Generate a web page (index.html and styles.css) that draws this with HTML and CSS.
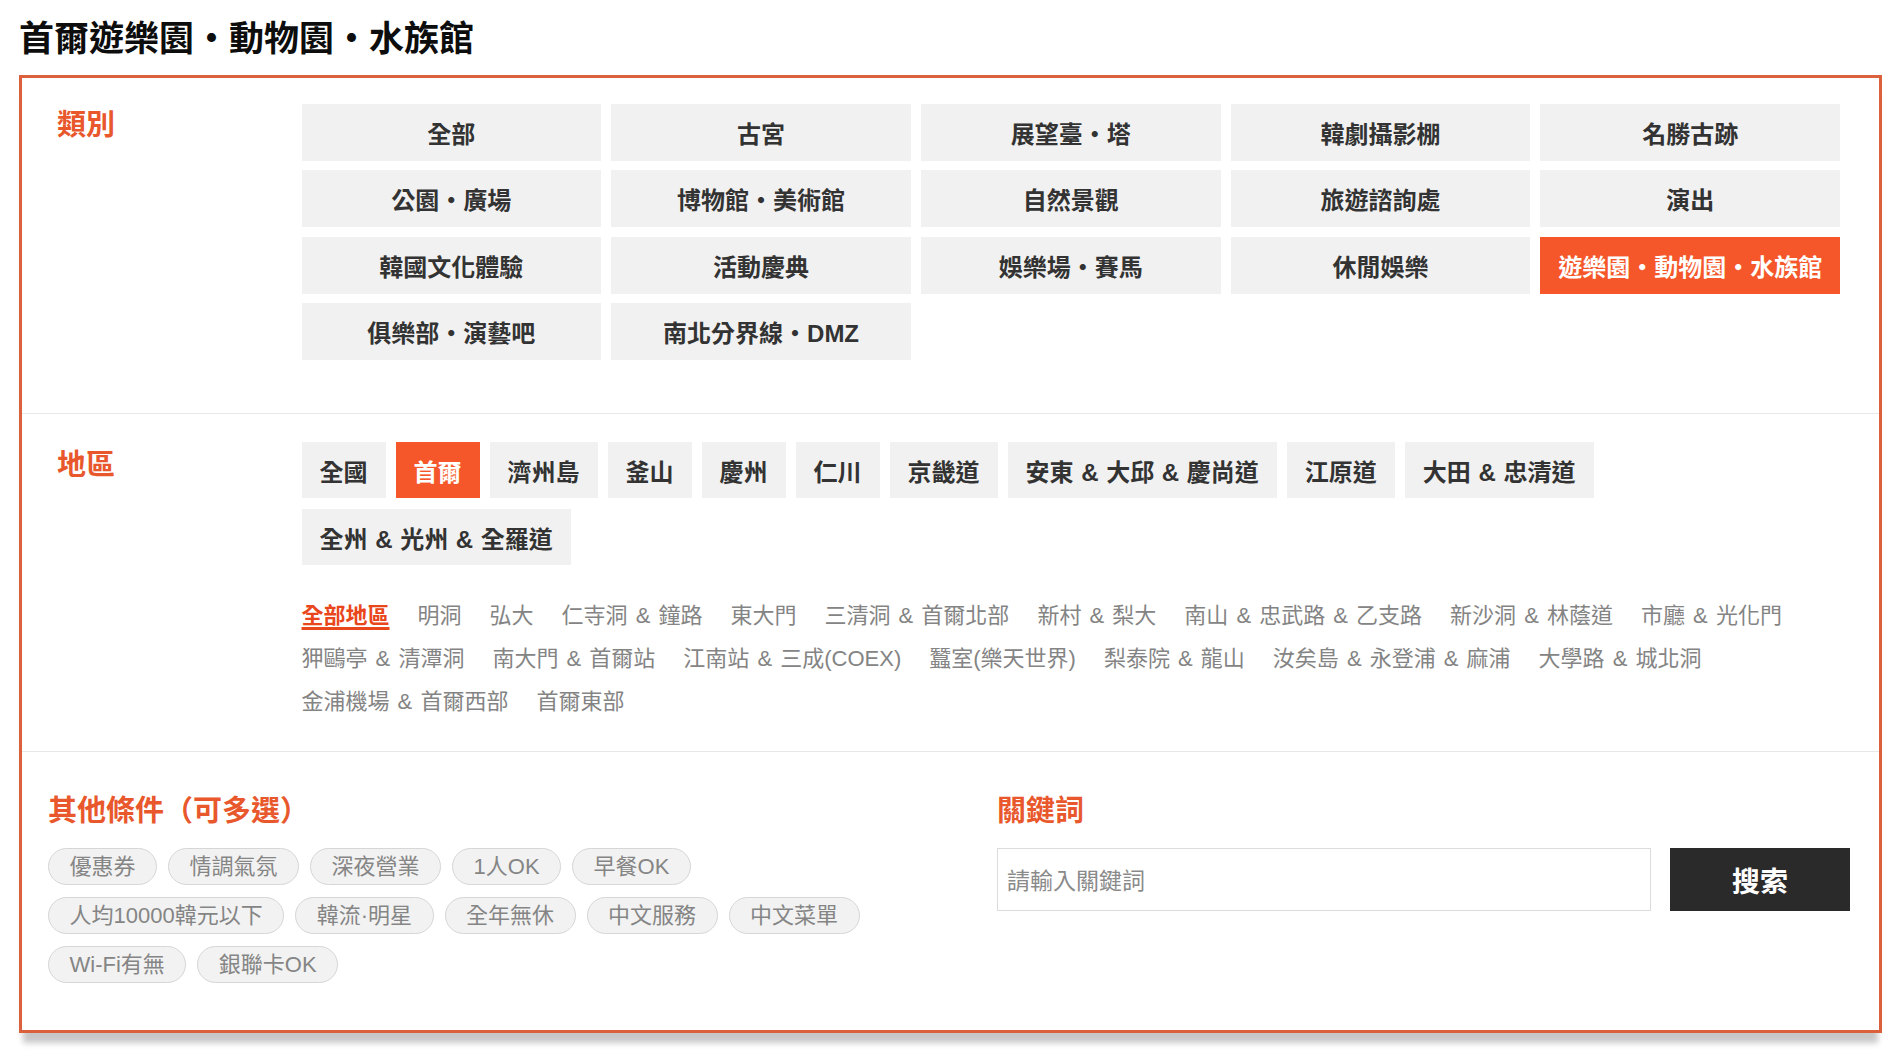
FILE: index.html
```html
<!DOCTYPE html>
<html lang="zh-Hant">
<head>
<meta charset="utf-8">
<title>首爾遊樂園・動物園・水族館</title>
<link rel="stylesheet" href="styles.css">
</head>
<body>
<div class="page">
  <h1 class="page-title">首爾遊樂園・動物園・水族館</h1>
  <div class="filter-box">
    <section class="filter-row filter-category">
      <h2 class="filter-label">類別</h2>
      <div class="cat-grid">
        <a class="cat-btn">全部</a>
        <a class="cat-btn">古宮</a>
        <a class="cat-btn">展望臺・塔</a>
        <a class="cat-btn">韓劇攝影棚</a>
        <a class="cat-btn">名勝古跡</a>
        <a class="cat-btn">公園・廣場</a>
        <a class="cat-btn">博物館・美術館</a>
        <a class="cat-btn">自然景觀</a>
        <a class="cat-btn">旅遊諮詢處</a>
        <a class="cat-btn">演出</a>
        <a class="cat-btn">韓國文化體驗</a>
        <a class="cat-btn">活動慶典</a>
        <a class="cat-btn">娛樂場・賽馬</a>
        <a class="cat-btn">休閒娛樂</a>
        <a class="cat-btn active">遊樂園・動物園・水族館</a>
        <a class="cat-btn">俱樂部・演藝吧</a>
        <a class="cat-btn">南北分界線・DMZ</a>
      </div>
    </section>
    <section class="filter-row filter-region">
      <h2 class="filter-label">地區</h2>
      <div class="region-body">
        <div class="region-list">
          <a class="region-btn">全國</a>
          <a class="region-btn active">首爾</a>
          <a class="region-btn">濟州島</a>
          <a class="region-btn">釜山</a>
          <a class="region-btn">慶州</a>
          <a class="region-btn">仁川</a>
          <a class="region-btn">京畿道</a>
          <a class="region-btn">安東 &amp; 大邱 &amp; 慶尚道</a>
          <a class="region-btn">江原道</a>
          <a class="region-btn">大田 &amp; 忠清道</a>
          <a class="region-btn">全州 &amp; 光州 &amp; 全羅道</a>
        </div>
        <div class="district-list">
          <a class="district active">全部地區</a>
          <a class="district">明洞</a>
          <a class="district">弘大</a>
          <a class="district">仁寺洞 &amp; 鐘路</a>
          <a class="district">東大門</a>
          <a class="district">三清洞 &amp; 首爾北部</a>
          <a class="district">新村 &amp; 梨大</a>
          <a class="district">南山 &amp; 忠武路 &amp; 乙支路</a>
          <a class="district">新沙洞 &amp; 林蔭道</a>
          <a class="district">市廳 &amp; 光化門</a>
          <a class="district">狎鷗亭 &amp; 清潭洞</a>
          <a class="district">南大門 &amp; 首爾站</a>
          <a class="district">江南站 &amp; 三成(COEX)</a>
          <a class="district">蠶室(樂天世界)</a>
          <a class="district">梨泰院 &amp; 龍山</a>
          <a class="district">汝矣島 &amp; 永登浦 &amp; 麻浦</a>
          <a class="district">大學路 &amp; 城北洞</a>
          <a class="district">金浦機場 &amp; 首爾西部</a>
          <a class="district">首爾東部</a>
        </div>
      </div>
    </section>
    <section class="filter-bottom">
      <div class="cond">
        <h2 class="filter-label">其他條件（可多選）</h2>
        <div class="tag-list">
          <span class="tag">優惠券</span>
          <span class="tag">情調氣氛</span>
          <span class="tag">深夜營業</span>
          <span class="tag">1人OK</span>
          <span class="tag">早餐OK</span>
          <span class="tag">人均10000韓元以下</span>
          <span class="tag">韓流·明星</span>
          <span class="tag">全年無休</span>
          <span class="tag">中文服務</span>
          <span class="tag">中文菜單</span>
          <span class="tag">Wi-Fi有無</span>
          <span class="tag">銀聯卡OK</span>
        </div>
      </div>
      <div class="keyword">
        <h2 class="filter-label">關鍵詞</h2>
        <div class="search-row">
          <input class="search-input" type="text" placeholder="請輸入關鍵詞">
          <button class="search-btn" type="button">搜索</button>
        </div>
      </div>
    </section>
  </div>
</div>
</body>
</html>
```

FILE: styles.css
```css
* { box-sizing: border-box; }

body {
  margin: 0;
  background: #fff;
  font-family: "Liberation Sans", "Noto Sans CJK TC", sans-serif;
  color: #333;
  text-spacing-trim: space-all;
}

.page {
  padding: 18px 17px 20px 19px;
}

.page-title {
  margin: 0 0 15.5px;
  font-size: 35px;
  line-height: 41px;
  font-weight: 700;
  color: #0d0d0d;
}

.filter-box {
  border: 3px solid #db613d;
  background: #fff;
  box-shadow: 0 14px 6px -4px rgba(0, 0, 0, 0.22);
}

.filter-label {
  margin: 4.5px 0 0;
  font-size: 29px;
  line-height: 34px;
  font-weight: 700;
  color: #e8582c;
}

.filter-row {
  display: grid;
  grid-template-columns: 244.5px 1fr;
  align-items: start;
}

.filter-category {
  padding: 26px 39px 53px 35px;
}

.cat-grid {
  display: grid;
  grid-template-columns: repeat(5, 1fr);
  gap: 9.5px 10px;
}

.cat-btn {
  height: 57px;
  display: flex;
  align-items: center;
  justify-content: center;
  background: #f1f1f1;
  font-size: 24px;
  font-weight: 700;
  color: #333;
  word-spacing: 2px;
}

.cat-btn.active {
  background: #f5572a;
  color: #fff;
}

.filter-region {
  border-top: 1px solid #e8e8e8;
  padding: 28px 39px 28px 35px;
}

.filter-region .filter-label {
  margin-top: 5.5px;
}

.region-list {
  display: flex;
  flex-wrap: wrap;
  gap: 11px 10px;
}

.region-btn {
  height: 56px;
  padding: 0 18px;
  display: flex;
  align-items: center;
  background: #f1f1f1;
  font-size: 24px;
  font-weight: 700;
  color: #333;
  word-spacing: 1px;
}

.region-btn.active {
  background: #f5572a;
  color: #fff;
}

.district-list {
  margin-top: 28.5px;
  display: flex;
  flex-wrap: wrap;
  column-gap: 28px;
  font-size: 22px;
  line-height: 43px;
  color: #848484;
  word-spacing: 2px;
}

.district.active {
  color: #e9461b;
  font-weight: 700;
  text-decoration: underline;
  text-decoration-thickness: 3px;
  text-underline-offset: 4px;
}

.filter-bottom {
  border-top: 1px solid #e8e8e8;
  display: grid;
  grid-template-columns: 1fr 853px;
  padding: 42px 29px 47px 26px;
}

.filter-bottom .filter-label {
  margin-top: 0;
}

.tag-list {
  margin-top: 20.5px;
  max-width: 860px;
  display: flex;
  flex-wrap: wrap;
  gap: 12px 11px;
}

.tag {
  height: 37px;
  padding: 0 20.5px;
  border: 1px solid #d6d6d6;
  border-radius: 19px;
  background: #f2f2f2;
  font-size: 22px;
  line-height: 36px;
  color: #858585;
}

.search-row {
  margin-top: 20.5px;
  display: flex;
  gap: 19px;
}

.search-input {
  width: 654px;
  height: 63px;
  padding: 3px 9px 0;
  border: 1px solid #dcdcdc;
  font-family: inherit;
  font-size: 23px;
  color: #333;
  outline: none;
}

.search-input::placeholder {
  color: #8a8a8a;
}

.search-btn {
  width: 180px;
  height: 63px;
  border: 0;
  background: #2a2a2a;
  color: #fff;
  font-family: inherit;
  font-size: 28px;
  font-weight: 700;
}
```
